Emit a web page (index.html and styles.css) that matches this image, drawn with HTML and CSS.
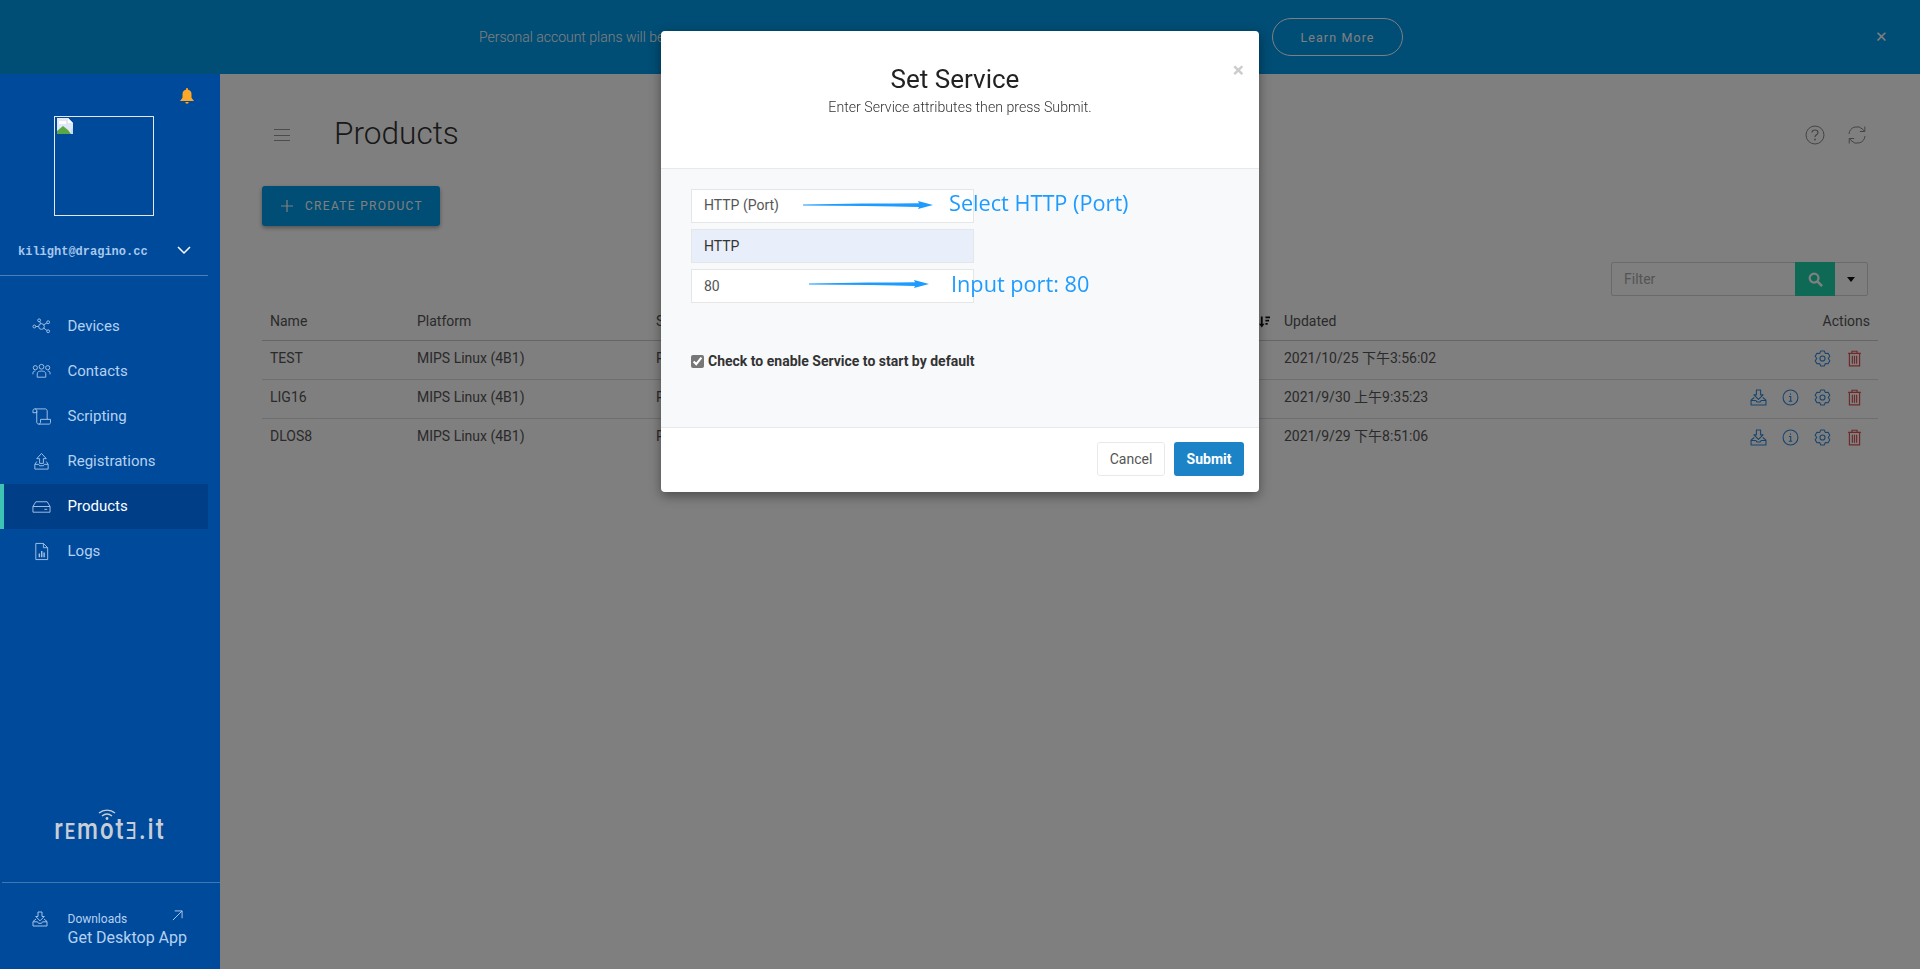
FILE: index.html
```html
<!DOCTYPE html>
<html lang="en">
<head>
<meta charset="utf-8">
<title>Products</title>
<link rel="stylesheet" href="styles.css">
</head>
<body>
<svg class="defs" width="0" height="0" aria-hidden="true">
  <symbol id="i-gear" viewBox="0 0 16 16"><path fill="none" stroke="currentColor" stroke-linejoin="round" d="M9.62 1 6.38 1 5.3 3.32 2.73 3.09 1.11 5.9 2.6 8 1.11 10.1 2.73 12.91 5.3 12.68 6.38 15 9.62 15 10.7 12.68 13.27 12.91 14.89 10.1 13.4 8 14.89 5.9 13.27 3.09 10.7 3.32Z"/><circle cx="8" cy="8" r="2.4" fill="none" stroke="currentColor"/></symbol>
  <symbol id="i-trash" viewBox="0 0 16 16"><path fill="none" stroke="currentColor" stroke-width="1.1" d="M2 3.2h12M5.6 3V1.2h4.8V3M3.2 3.2V15h9.6V3.2M6 5.5v7.5M8 5.5v7.5M10 5.5v7.5"/></symbol>
  <symbol id="i-info" viewBox="0 0 16 16"><circle cx="8" cy="8" r="7" fill="none" stroke="currentColor"/><path fill="none" stroke="currentColor" d="M6.6 7h1.6v4.5M6.4 11.5h3.2M8 4.2v1.3"/></symbol>
  <symbol id="i-inbox" viewBox="0 0 16 16"><path fill="none" stroke="currentColor" stroke-linejoin="round" d="M6 1h4v4.5h2.3L8 9.8 3.7 5.5H6ZM4 8 1 10.5V15h14v-4.500L12 8M1 10.800h4.500l1 1.500h3l1-1.500H15"/></symbol>
</svg>

<header class="banner">
  <p class="banner-text">Personal account plans will be limited to five devices starting next month, so please review your plan and upgrade options.</p>
  <a class="banner-btn">Learn More</a>
  <span class="banner-close">&#x2715;</span>
</header>

<div class="layout">
  <aside class="sidebar">
    <div class="bell-row">
      <svg class="bell" viewBox="0 0 16 16"><path fill="currentColor" d="M8 0a1 1 0 0 1 1 1v.7A4.600 4.600 0 0 1 12.500 6.200v3.600L15 13H1l2.500-3.200V6.200A4.600 4.600 0 0 1 7 1.700V1a1 1 0 0 1 1-1zM6.300 14h3.400a1.700 1.700 0 0 1-3.400 0z"/></svg>
    </div>
    <div class="avatar">
      <svg class="broken" viewBox="0 0 16 16"><path fill="#dfe8f6" d="M0 0h11l5 5v11H0z"/><path fill="#fff" d="M11 0v5h5zM2 3h7v3H2z"/><path fill="#5aa845" d="M0 16v-3l6-5 5 4 3 4z"/><path fill="#c9d8ee" d="M14 12l2-2v6h-2z"/></svg>
    </div>
    <div class="account">
      <span class="email">kilight@dragino.cc</span>
      <svg class="chev" viewBox="0 0 14 9"><path fill="none" stroke="currentColor" stroke-width="1.500" d="M1 1l6 6 6-6"/></svg>
    </div>
    <nav class="nav">
      <a class="nav-item"><svg class="nav-icon" viewBox="0 0 20 20"><g fill="none" stroke="currentColor"><circle cx="2.500" cy="10" r="1.500"/><circle cx="7.500" cy="3.500" r="1.500"/><circle cx="17" cy="5.500" r="1.500"/><circle cx="17" cy="15" r="1.500"/><circle cx="10" cy="10" r="3"/><path d="M4 10h3M8.200 5l1 2.200M15.700 6.300l-3.500 2M15.700 14.200l-3.500-2.600"/></g></svg><span>Devices</span></a>
      <a class="nav-item"><svg class="nav-icon" viewBox="0 0 20 20"><g fill="none" stroke="currentColor"><circle cx="3.500" cy="6" r="2.200"/><circle cx="10" cy="5" r="2.500"/><circle cx="16.500" cy="6" r="2.200"/><path d="M1 13v-1.500C1 10 2 9.500 3.500 9.500M19 13v-1.500c0-1.500-1-2-2.500-2M5.500 16v-3.500C5.500 10.500 7 9.500 10 9.500s4.500 1 4.500 3V16z"/></g></svg><span>Contacts</span></a>
      <a class="nav-item"><svg class="nav-icon" viewBox="0 0 20 20"><g fill="none" stroke="currentColor"><path d="M3 2h11c1 0 2 1 2 2v9M3 2c-1.200 0-2 .8-2 2v2h4V4c0-1.200-.8-2-2-2zM5 4v12c0 1 .8 2 2 2h11c1 0 1.500-1 1.500-2v-3H9v3c0 1-.8 2-2 2"/></g></svg><span>Scripting</span></a>
      <a class="nav-item"><svg class="nav-icon" viewBox="0 0 20 20"><g fill="none" stroke="currentColor" stroke-linejoin="round"><path d="M10 1.500 15 7h-3v5H8V7H5z"/><path d="M5 10 3 13v5h14v-5l-2-3M3 13h4l1 1.500h4l1-1.500h4"/></g></svg><span>Registrations</span></a>
      <a class="nav-item active"><svg class="nav-icon" viewBox="0 0 20 20"><g fill="none" stroke="currentColor"><path d="M1 10l3-5h12l3 5v6H1zM1 10h18M13 13h3"/></g></svg><span>Products</span></a>
      <a class="nav-item"><svg class="nav-icon" viewBox="0 0 20 20"><g fill="none" stroke="currentColor"><path d="M4 1.500h8l4.500 4.500v12.500H4zM12 1.500V6h4.500"/></g><path fill="currentColor" d="M7 12h1.500v4H7zM9.500 9.500H11V16H9.500zM12 11h1.500v5H12z"/></svg><span>Logs</span></a>
    </nav>
    <div class="logo-wrap">
      <div class="logo">
        <svg class="wifi" viewBox="0 0 18 11"><g fill="none" stroke="currentColor" stroke-width="1.400"><path d="M1 4c4.500-3.800 11.500-3.800 16 0M4 7c3-2.400 7-2.400 10 0"/></g><circle cx="9" cy="9.500" r="1.400" fill="currentColor"/></svg>
        <span class="logo-text">r<span class="small-cap">E</span>mot<span class="small-cap">&#x18E;</span>.it</span>
      </div>
    </div>
    <a class="download">
      <svg class="dl-icon" viewBox="0 0 16 16"><use href="#i-inbox"/></svg>
      <span class="dl-text"><small>Downloads</small><strong>Get Desktop App</strong></span>
      <svg class="dl-arrow" viewBox="0 0 12 12"><path fill="none" stroke="currentColor" d="M1 11 11 1M3 1h8v8"/></svg>
    </a>
  </aside>

  <main class="main">
    <div class="title-row">
      <span class="burger"><i></i><i></i><i></i></span>
      <h1 class="title">Products</h1>
      <span class="title-tools">
        <svg class="tool" viewBox="0 0 20 20"><circle cx="10" cy="10" r="9" fill="none" stroke="currentColor"/><path fill="none" stroke="currentColor" stroke-width="1.200" d="M7 7.500C7 5.500 8.500 5 10 5s3 .8 3 2.500c0 2.300-3 2.300-3 4.500"/><circle cx="10" cy="14.500" r=".9" fill="currentColor"/></svg>
        <svg class="tool" viewBox="0 0 20 20"><path fill="none" stroke="currentColor" d="M2 9a8 8 0 0 1 14-4.500l1.500 2M18 11a8 8 0 0 1-14 4.500l-1.500-2M17.800 1.500v5h-5M2.200 18.500v-5h5"/></svg>
      </span>
    </div>
    <a class="create-btn"><svg class="plus" viewBox="0 0 12 12"><path fill="none" stroke="currentColor" stroke-width="1.200" d="M6 0v12M0 6h12"/></svg>Create Product</a>
    <div class="filter-row">
      <div class="filter">
        <input class="filter-input" type="text" placeholder="Filter">
        <button class="filter-go"><svg viewBox="0 0 16 16"><circle cx="6.500" cy="6.500" r="4.700" fill="none" stroke="currentColor" stroke-width="2.400"/><path stroke="currentColor" stroke-width="2.800" d="M10 10l5 5"/></svg></button>
        <button class="filter-menu"><i class="caret"></i></button>
      </div>
    </div>
    <table class="table">
      <thead>
        <tr>
          <th class="c-name">Name</th>
          <th class="c-platform">Platform</th>
          <th class="c-status">Status<svg class="sort" viewBox="0 0 12 12"><path fill="currentColor" d="M2 0h2v8h2L3 12 0 8h2zM7 0h5v2H7zM7 3.500h4v2H7zM7 7h2.500v2H7z"/></svg></th>
          <th class="c-updated">Updated</th>
          <th class="c-actions">Actions</th>
        </tr>
      </thead>
      <tbody>
        <tr>
          <td>TEST</td><td>MIPS Linux (4B1)</td><td>Private</td><td>2021/10/25 下午3:56:02</td>
          <td class="actions"><svg class="act blue"><use href="#i-gear"/></svg><svg class="act red"><use href="#i-trash"/></svg></td>
        </tr>
        <tr>
          <td>LIG16</td><td>MIPS Linux (4B1)</td><td>Private</td><td>2021/9/30 上午9:35:23</td>
          <td class="actions"><svg class="act blue"><use href="#i-inbox"/></svg><svg class="act blue"><use href="#i-info"/></svg><svg class="act blue"><use href="#i-gear"/></svg><svg class="act red"><use href="#i-trash"/></svg></td>
        </tr>
        <tr>
          <td>DLOS8</td><td>MIPS Linux (4B1)</td><td>Private</td><td>2021/9/29 下午8:51:06</td>
          <td class="actions"><svg class="act blue"><use href="#i-inbox"/></svg><svg class="act blue"><use href="#i-info"/></svg><svg class="act blue"><use href="#i-gear"/></svg><svg class="act red"><use href="#i-trash"/></svg></td>
        </tr>
      </tbody>
    </table>
  </main>
</div>

<div class="backdrop"></div>

<div class="modal-wrap">
  <section class="modal">
    <header class="modal-head">
      <span class="modal-close">&times;</span>
      <h2 class="modal-title">Set Service</h2>
      <p class="modal-sub">Enter Service attributes then press Submit.</p>
    </header>
    <div class="modal-body">
      <div class="field select">HTTP (Port)</div>
      <div class="field tinted">HTTP</div>
      <div class="field">80</div>
      <label class="check"><input type="checkbox" checked>Check to enable Service to start by default</label>
      <div class="note note-a">
        <svg class="note-arrow" viewBox="0 0 130 8"><path fill="#1e9bff" d="M0 3.600 60 2.600 116 2.300 115 0 130 4 115 8 116 6 60 5 0 4.400z"/></svg>
        <span>Select HTTP (Port)</span>
      </div>
      <div class="note note-b">
        <svg class="note-arrow short" viewBox="0 0 120 8"><path fill="#1e9bff" d="M0 3.600 60 2.600 106 2.300 105 0 120 4 105 8 106 6 60 5 0 4.400z"/></svg>
        <span>Input port: 80</span>
      </div>
    </div>
    <footer class="modal-foot">
      <button class="btn-cancel">Cancel</button>
      <button class="btn-submit">Submit</button>
    </footer>
  </section>
</div>
</body>
</html>
```
FILE: styles.css
```css
* { box-sizing: border-box; }
html, body { margin: 0; height: 100%; overflow: hidden; }
body {
  display: flex;
  flex-direction: column;
  height: 969px;
  font-family: Roboto, "Noto Sans CJK SC", sans-serif;
  font-size: 14px;
  color: #555;
  background: #fff;
}
.defs { position: absolute; }

/* banner */
.banner {
  flex: none;
  height: 74px;
  display: flex;
  align-items: center;
  padding: 0 32px 0 479px;
  background: #009aea;
  color: #fff;
}
.banner-text {
  flex: none;
  width: 777px;
  margin: 0;
  white-space: nowrap;
  font-weight: 300;
}
.banner-btn {
  flex: none;
  width: 131px;
  height: 38px;
  margin-left: 16px;
  display: flex;
  align-items: center;
  justify-content: center;
  border: 1px solid #fff;
  border-radius: 19px;
  font-size: 12.5px;
  font-weight: 400;
  letter-spacing: 1.1px;
}
.banner-close { margin-left: auto; font-size: 15px; }

/* layout */
.layout { flex: 1; display: flex; min-height: 0; }

/* sidebar */
.sidebar {
  position: relative;
  z-index: 20;
  flex: none;
  width: 220px;
  display: flex;
  flex-direction: column;
  background: #004a9c;
  color: #b5d1f0;
}
.bell-row { display: flex; justify-content: flex-end; height: 42px; padding: 14px 25px 0 0; }
.bell { width: 16px; height: 16px; color: #ffa726; }
.avatar {
  align-self: flex-start;
  width: 100px;
  height: 100px;
  margin-left: 54px;
  padding: 1px;
  border: 1px solid #e4e8ee;
}
.broken { display: block; width: 16px; height: 16px; margin: 0 1px; }
.account {
  display: flex;
  align-items: center;
  justify-content: space-between;
  width: 208px;
  height: 60px;
  padding: 12px 17px 0 18px;
  border-bottom: 1px solid rgba(255,255,255,.3);
}
.email { font: 700 12px/1 "Liberation Mono", monospace; color: #a8c8ec; }
.chev { width: 14px; height: 9px; margin-top: -2px; color: #fff; }
.nav { display: flex; flex-direction: column; margin-top: 27.5px; }
.nav-item {
  display: flex;
  align-items: center;
  width: 208px;
  height: 45px;
  padding-left: 32px;
  font-size: 15px;
  color: #b5d1f0;
}
.nav-item.active {
  padding-left: 28px;
  border-left: 4px solid #3dc4b4;
  background: #003f88;
  color: #fff;
}
.nav-icon { width: 19px; height: 19px; margin-right: 16.5px; color: #a3c2e6; }
.logo-wrap { margin-top: auto; display: flex; justify-content: center; height: 74px; }
.logo {
  position: relative;
  height: 40px;
  padding-top: 3px;
  font: 500 24px/40px Roboto, "DejaVu Sans", sans-serif;
  letter-spacing: 2px;
  color: #c9ced6;
}
.logo-text { display: inline-block; transform: scaleY(1.25); transform-origin: 50% 70%; }
.small-cap { font-size: 18px; }
.wifi { position: absolute; left: 44px; top: 1px; width: 18px; height: 11px; }
.download {
  position: relative;
  flex: none;
  height: 87px;
  margin-left: 2px;
  display: flex;
  padding: 28px 0 0 30px;
  border-top: 1px solid rgba(255,255,255,.25);
}
.dl-icon { width: 16px; height: 16px; margin-right: 19.5px; color: #a3c2e6; }
.dl-text { display: flex; flex-direction: column; }
.dl-text small { font-size: 12px; line-height: 16px; }
.dl-text strong { font-size: 16px; font-weight: 400; line-height: 22px; }
.dl-arrow { position: absolute; left: 170px; top: 27px; width: 11px; height: 11px; }

/* main */
.main { flex: 1; min-width: 0; padding: 34px 42px 0; }
.title-row { display: flex; align-items: center; height: 50px; }
.burger { display: flex; flex-direction: column; gap: 4.5px; width: 16px; margin: 4px 44px 0 12px; }
.burger i { display: block; height: 1px; background: #999; }
.title { margin: 0; font-size: 31.600px; font-weight: 300; color: #333; }
.title-tools { margin: 4px 11px 0 auto; display: flex; gap: 22px; color: #888; }
.tool { width: 20px; height: 20px; }
.create-btn {
  width: 178px;
  height: 40px;
  margin-top: 28px;
  display: flex;
  align-items: center;
  padding-left: 19px;
  border-radius: 3px;
  background: #009aea;
  box-shadow: 0 2px 4px rgba(0,0,0,.35);
  color: #fff;
  font-size: 12px;
  font-weight: 400;
  letter-spacing: 1.300px;
  text-transform: uppercase;
}
.plus { width: 12px; height: 12px; margin-right: 12px; }
.filter-row { display: flex; justify-content: flex-end; margin: 36px 10px 0 0; }
.filter {
  display: flex;
  width: 257px;
  height: 34px;
  border: 1px solid #d5d5d5;
  border-radius: 2px;
}
.filter-input {
  flex: 1;
  min-width: 0;
  padding: 0 12px;
  border: 0;
  outline: 0;
  background: transparent;
  font: 14px Roboto, sans-serif;
}
.filter-input::placeholder { color: #aaa; }
.filter-go {
  flex: none;
  width: 40px;
  margin: -1px 0;
  padding: 0;
  border: 0;
  background: #1ed4aa;
  color: #fff;
  display: flex;
  align-items: center;
  justify-content: center;
}
.filter-go svg { width: 15px; height: 15px; }
.filter-menu {
  flex: none;
  width: 32px;
  padding: 0;
  border: 0;
  background: transparent;
  display: flex;
  align-items: center;
  justify-content: center;
}
.caret { border: 4px solid transparent; border-top: 5px solid #111; margin-top: 5px; }
.table {
  width: 100%;
  margin-top: 6px;
  table-layout: fixed;
  border-collapse: collapse;
}
.table th, .table td {
  height: 39px;
  padding: 0 8px;
  font-weight: 400;
  line-height: 20px;
  text-align: left;
  white-space: nowrap;
}
.table th { height: 38px; padding-top: 1px; border-bottom: 1px solid #ccc; color: #555; }
.table td { padding-bottom: 4px; border-bottom: 1px solid #ddd; }
.table tr:last-child td { border-bottom: 0; }
.c-name { width: 147px; }
.c-platform { width: 239px; }
.c-status { width: 628px; position: relative; }
.c-updated { width: 300px; }
.c-actions, .actions { text-align: right !important; }
.sort { position: absolute; right: 6px; top: 14px; width: 11px; height: 12px; color: #111; }
.table td.actions { padding: 0 15px 4px 0; }
.act { width: 17px; height: 17px; margin-left: 15px; vertical-align: middle; }
.blue { color: #2f86d8; }
.red { color: #e05252; }

/* overlay */
.backdrop { position: fixed; inset: 0; z-index: 10; background: rgba(0,0,0,.5); }
.modal-wrap { position: fixed; inset: 0; z-index: 30; display: flex; justify-content: center; align-items: flex-start; padding-top: 31px; }
.modal {
  width: 598px;
  border-radius: 4px;
  overflow: hidden;
  background: #fff;
  box-shadow: 0 4px 12px rgba(0,0,0,.4);
  color: #333;
}
.modal-head {
  position: relative;
  height: 138px;
  padding-top: 32px;
  text-align: center;
  border-bottom: 1px solid #e7eaec;
}
.modal-close {
  position: absolute;
  right: 15px;
  top: 29px;
  font-size: 21px;
  line-height: 1;
  font-weight: 700;
  color: #ccc;
}
.modal-title { margin: 0 10px 0 0; font-size: 26px; line-height: 32px; font-weight: 400; color: #222; }
.modal-sub { margin: 2px 0 0; font-size: 14.150px; font-weight: 300; line-height: 20px; color: #333; }
.modal-body {
  position: relative;
  height: 258px;
  padding: 20px 30px 0;
  background: #f8f9fb;
}
.field {
  width: 283px;
  height: 34px;
  margin-bottom: 6px;
  padding: 0 12px;
  display: flex;
  align-items: center;
  background: #fff;
  border: 1px solid #e5e6e7;
  color: #555;
}
.field.select { padding-bottom: 2px; }
.field.tinted { background: #e8eefa; color: #333; }
.check {
  display: flex;
  align-items: center;
  margin-top: 50px;
  font-weight: 700;
  font-size: 14px;
  color: #333;
}
.check input { width: 13px; height: 13px; margin: 0 4px 0 0; accent-color: #777; }
.note { position: absolute; display: flex; align-items: center; color: #1e9bff; font: 400 21.700px/28px "Open Sans", sans-serif; }
.note-a { left: 142px; top: 20px; }
.note-b { left: 148px; top: 101px; }
.note-arrow { width: 130px; height: 8px; margin: 4px 16px 0 0; }
.note-arrow.short { width: 120px; margin: 0 22px 0 0; }
.modal-foot {
  height: 65px;
  display: flex;
  justify-content: flex-end;
  gap: 9px;
  padding: 14px 15px 0 0;
  border-top: 1px solid #e7eaec;
}
.btn-cancel, .btn-submit {
  height: 34px;
  border-radius: 3px;
  font: 14px Roboto, sans-serif;
}
.btn-cancel { width: 68px; background: #fff; border: 1px solid #e7eaec; color: #555; }
.btn-submit { width: 70px; background: #1c84c6; border: 0; color: #fff; font-weight: 700; }
```
